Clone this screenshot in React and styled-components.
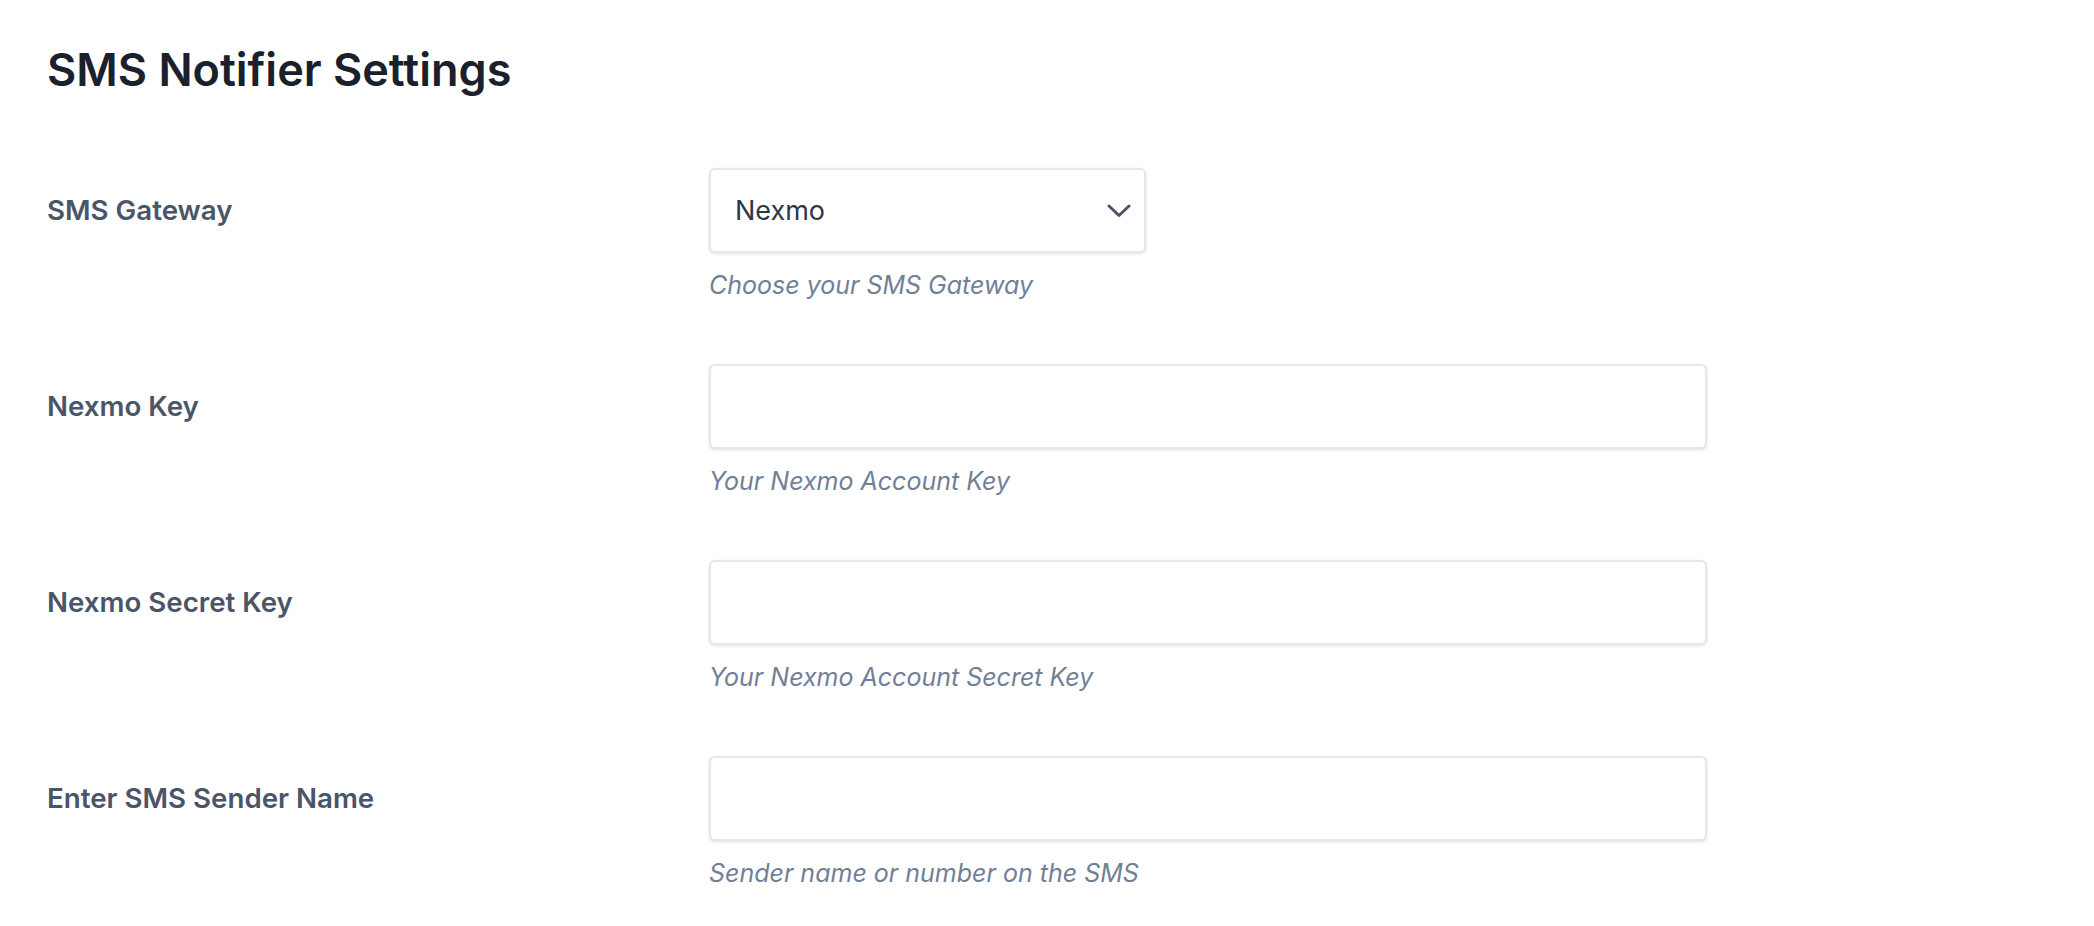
import React from "react";
import styled, { createGlobalStyle } from "styled-components";

const GlobalStyle = createGlobalStyle`
  html, body {
    margin: 0;
    padding: 0;
    background: #ffffff;
  }
  body {
    font-family: Inter, "Noto Sans", "Liberation Sans", sans-serif;
  }
`;

const Page = styled.div`
  padding: 40px 47px;
`;

const Title = styled.h1`
  margin: 0 0 68px;
  font-size: 45px;
  line-height: 60px;
  font-weight: 600;
  color: #1a202c;
`;

const Form = styled.form`
  display: flex;
  flex-direction: column;
  gap: 61px;
`;

const Row = styled.div`
  display: grid;
  grid-template-columns: 662px 998px;
  align-items: start;
`;

const Label = styled.label`
  height: 83px;
  display: flex;
  align-items: center;
  font-size: 27.7px;
  font-weight: 600;
  color: #4a5568;
`;

const Field = styled.div`
  display: flex;
  flex-direction: column;
`;

const SelectBox = styled.div`
  position: relative;
  width: ${(p) => p.width || "100%"};
`;

const Select = styled.select`
  width: 100%;
  height: 85px;
  box-sizing: border-box;
  appearance: none;
  border: 2px solid #e2e8f0;
  border-radius: 6px;
  background: #fff;
  box-shadow: 0 1px 3px rgba(0, 0, 0, 0.12);
  padding: 0 60px 0 24px;
  font-family: inherit;
  font-size: 27px;
  color: #2d3748;
  outline: none;
`;

const Chevron = styled.svg`
  position: absolute;
  right: 15px;
  top: 50%;
  transform: translateY(-50%);
  pointer-events: none;
`;

const Input = styled.input`
  width: 100%;
  height: 85px;
  box-sizing: border-box;
  border: 2px solid #e2e8f0;
  border-radius: 6px;
  background: #fff;
  box-shadow: 0 1px 3px rgba(0, 0, 0, 0.12);
  padding: 0 24px;
  font-family: inherit;
  font-size: 27px;
  color: #2d3748;
  outline: none;
`;

const Help = styled.p`
  margin: 14px 0 0;
  font-size: 25px;
  line-height: 36px;
  font-style: italic;
  color: #718096;
`;

const fields = [
  { id: "key", label: "Nexmo Key", help: "Your Nexmo Account Key" },
  { id: "secret", label: "Nexmo Secret Key", help: "Your Nexmo Account Secret Key" },
  { id: "sender", label: "Enter SMS Sender Name", help: "Sender name or number on the SMS" },
];

export default function App() {
  return (
    <>
      <GlobalStyle />
      <Page>
        <Title>SMS Notifier Settings</Title>
        <Form onSubmit={(e) => e.preventDefault()}>
          <Row>
            <Label htmlFor="gateway">SMS Gateway</Label>
            <Field>
              <SelectBox width="437px">
                <Select id="gateway" defaultValue="nexmo">
                  <option value="nexmo">Nexmo</option>
                  <option value="twilio">Twilio</option>
                </Select>
                <Chevron width="24" height="14" viewBox="0 0 24 14">
                  <polyline
                    points="2,2 12,11.5 22,2"
                    fill="none"
                    stroke="#4a5568"
                    strokeWidth="3"
                    strokeLinecap="round"
                    strokeLinejoin="round"
                  />
                </Chevron>
              </SelectBox>
              <Help>Choose your SMS Gateway</Help>
            </Field>
          </Row>
          {fields.map((f) => (
            <Row key={f.id}>
              <Label htmlFor={f.id}>{f.label}</Label>
              <Field>
                <Input id={f.id} type="text" />
                <Help>{f.help}</Help>
              </Field>
            </Row>
          ))}
        </Form>
      </Page>
    </>
  );
}
